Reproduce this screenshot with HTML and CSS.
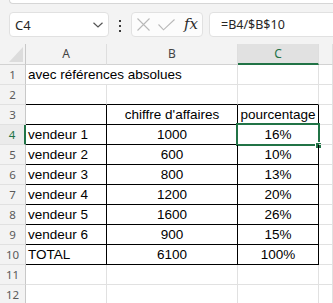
FILE: index.html
```html
<!DOCTYPE html>
<html lang="fr">
<head>
<meta charset="utf-8">
<link rel="stylesheet" href="styles.css">
</head>
<body>
<div class="ribbon"></div>
<div class="fbar">
  <div class="namebox"><span>C4</span>
    <svg class="chev" width="10" height="6" viewBox="0 0 10 6"><path d="M0.5 0.8 L5 5 L9.5 0.8" fill="none" stroke="#555" stroke-width="1.2"/></svg>
  </div>
  <div class="dots"><i></i><i></i><i></i></div>
  <div class="fbtns">
    <svg class="ix" width="13" height="13" viewBox="0 0 13 13"><path d="M0.5 0.5 L12.5 12.5 M12.5 0.5 L0.5 12.5" stroke="#b8b8b8" stroke-width="1.1" fill="none"/></svg>
    <svg class="ick" width="17" height="12" viewBox="0 0 17 12"><path d="M0.5 5.5 L5.5 10.8 L16.5 0.5" stroke="#b8b8b8" stroke-width="1.1" fill="none"/></svg>
    <span class="fx">fx</span>
  </div>
  <div class="finput">=B4/$B$10</div>
</div>
<div class="sheet">
  <div class="h corner"><svg width="26" height="21" viewBox="0 0 26 21"><polygon points="23,3 23,18 9,18" fill="#dcdcdc"/></svg></div>
  <div class="h">A</div><div class="h">B</div><div class="h hsel">C</div><div class="h"></div>

  <div class="r">1</div><div class="c l over">avec références absolues</div><div class="c"></div><div class="c"></div><div class="c"></div>
  <div class="r">2</div><div class="c tb"></div><div class="c tb"></div><div class="c tb"></div><div class="c"></div>
  <div class="r">3</div><div class="c t"></div><div class="c t ctr">chiffre d'affaires</div><div class="c t ctr">pourcentage</div><div class="c"></div>
  <div class="r rsel">4</div><div class="c t l">vendeur 1</div><div class="c t ctr">1000</div><div class="c t ctr selcell">16%<span class="selbox"></span><span class="handle"></span></div><div class="c"></div>
  <div class="r">5</div><div class="c t l">vendeur 2</div><div class="c t ctr">600</div><div class="c t ctr">10%</div><div class="c"></div>
  <div class="r">6</div><div class="c t l">vendeur 3</div><div class="c t ctr">800</div><div class="c t ctr">13%</div><div class="c"></div>
  <div class="r">7</div><div class="c t l">vendeur 4</div><div class="c t ctr">1200</div><div class="c t ctr">20%</div><div class="c"></div>
  <div class="r">8</div><div class="c t l">vendeur 5</div><div class="c t ctr">1600</div><div class="c t ctr">26%</div><div class="c"></div>
  <div class="r">9</div><div class="c t l">vendeur 6</div><div class="c t ctr">900</div><div class="c t ctr">15%</div><div class="c"></div>
  <div class="r">10</div><div class="c t l">TOTAL</div><div class="c t ctr">6100</div><div class="c t ctr">100%</div><div class="c"></div>
  <div class="r">11</div><div class="c"></div><div class="c"></div><div class="c"></div><div class="c"></div>
  <div class="r">12</div><div class="c"></div><div class="c"></div><div class="c"></div><div class="c"></div>
</div>
</body>
</html>
```
FILE: styles.css
```css
html, body {
  margin: 0;
  padding: 0;
}
body {
  width: 333px;
  height: 303px;
  overflow: hidden;
  background: #f3f3f3;
  font-family: "Liberation Sans", Arial, sans-serif;
}
.ribbon {
  height: 3px;
  margin-left: 9px;
  background: #fff;
  border-left: 1px solid #d6d6d6;
  border-bottom: 1px solid #d6d6d6;
  border-bottom-left-radius: 5px;
}
.fbar {
  display: flex;
  align-items: flex-start;
  padding-top: 8px;
  height: 32px;
}
.namebox {
  margin-left: 9px;
  width: 100px;
  height: 25px;
  box-sizing: border-box;
  border: 1px solid #e1e1e1;
  border-radius: 4px;
  background: #fff;
  display: flex;
  align-items: center;
  justify-content: space-between;
  padding: 0 5px;
  font: 13px "Noto Sans", sans-serif;
  color: #262626;
  flex: none;
}
.chev { display: block; margin-top: 1px; }
.dots {
  margin-left: 10px;
  width: 2px;
  padding-top: 8px;
  display: flex;
  flex-direction: column;
  gap: 3px;
  flex: none;
}
.dots i {
  display: block;
  width: 2px;
  height: 2px;
  background: #3c3c3c;
}
.fbtns {
  margin-left: 10px;
  width: 72px;
  height: 25px;
  box-sizing: border-box;
  border: 1px solid #e1e1e1;
  border-radius: 4px;
  background: #fcfcfc;
  display: flex;
  align-items: center;
  padding-left: 5px;
  flex: none;
}
.ix { display: block; margin-top: 0px; }
.ick { display: block; margin-left: 8px; margin-top: 0px; }
.fx {
  margin-left: 9px;
  font-family: "DejaVu Serif", serif;
  font-style: italic;
  font-size: 15px;
  color: #2b2b2b;
  line-height: 23px;
}
.finput {
  margin-left: 6px;
  flex: 1;
  margin-right: -10px;
  height: 25px;
  box-sizing: border-box;
  border: 1px solid #e1e1e1;
  border-radius: 4px;
  background: #fff;
  padding-left: 11px;
  font: 12.5px/23px "Noto Sans", sans-serif;
  color: #262626;
}
.sheet {
  display: grid;
  grid-template-columns: 26px 81px 131px 81px 1fr;
  grid-template-rows: 21px repeat(12, 20px);
  background: #fff;
}
.h {
  box-sizing: border-box;
  background: #f3f3f3;
  border-right: 1px solid #dedede;
  border-bottom: 1px solid #d2d2d2;
  font: 12px/20px "Noto Sans", sans-serif;
  color: #444;
  text-align: center;
}
.corner {
  border-right: 1px solid #c8c8c8;
}
.corner svg { display: block; }
.hsel {
  background: #e1e1e1;
  color: #217346;
  border-bottom: 2px solid #217346;
  line-height: 19px;
}
.r {
  box-sizing: border-box;
  background: #f3f3f3;
  border-right: 1px solid #c8c8c8;
  border-bottom: 1px solid #e1e1e1;
  font: 11.5px/19px "Noto Sans", sans-serif;
  color: #5a5a5a;
  text-align: center;
}
.rsel {
  border-right: 2px solid #217346;
  color: #217346;
  background: #ebebeb;
}
.c {
  box-sizing: border-box;
  border-right: 1px solid #e1e1e1;
  border-bottom: 1px solid #e1e1e1;
  font-size: 13.5px;
  line-height: 19px;
  white-space: nowrap;
  color: #000;
  position: relative;
}
.l { padding-left: 2px; }
.ctr { text-align: center; }
.over {
  border-right: none;
  overflow: visible;
  z-index: 1;
}
.tb { border-bottom-color: #000; }
.t {
  border-right-color: #000;
  border-bottom-color: #000;
}
.selbox {
  position: absolute;
  left: -2px;
  top: -2px;
  width: 84px;
  height: 23px;
  box-sizing: border-box;
  border: 2px solid #217346;
}
.handle {
  position: absolute;
  left: 77px;
  top: 17px;
  width: 6px;
  height: 6px;
  box-sizing: border-box;
  background: #217346;
  border-left: 1px solid #fff;
  border-top: 1px solid #fff;
}
```
